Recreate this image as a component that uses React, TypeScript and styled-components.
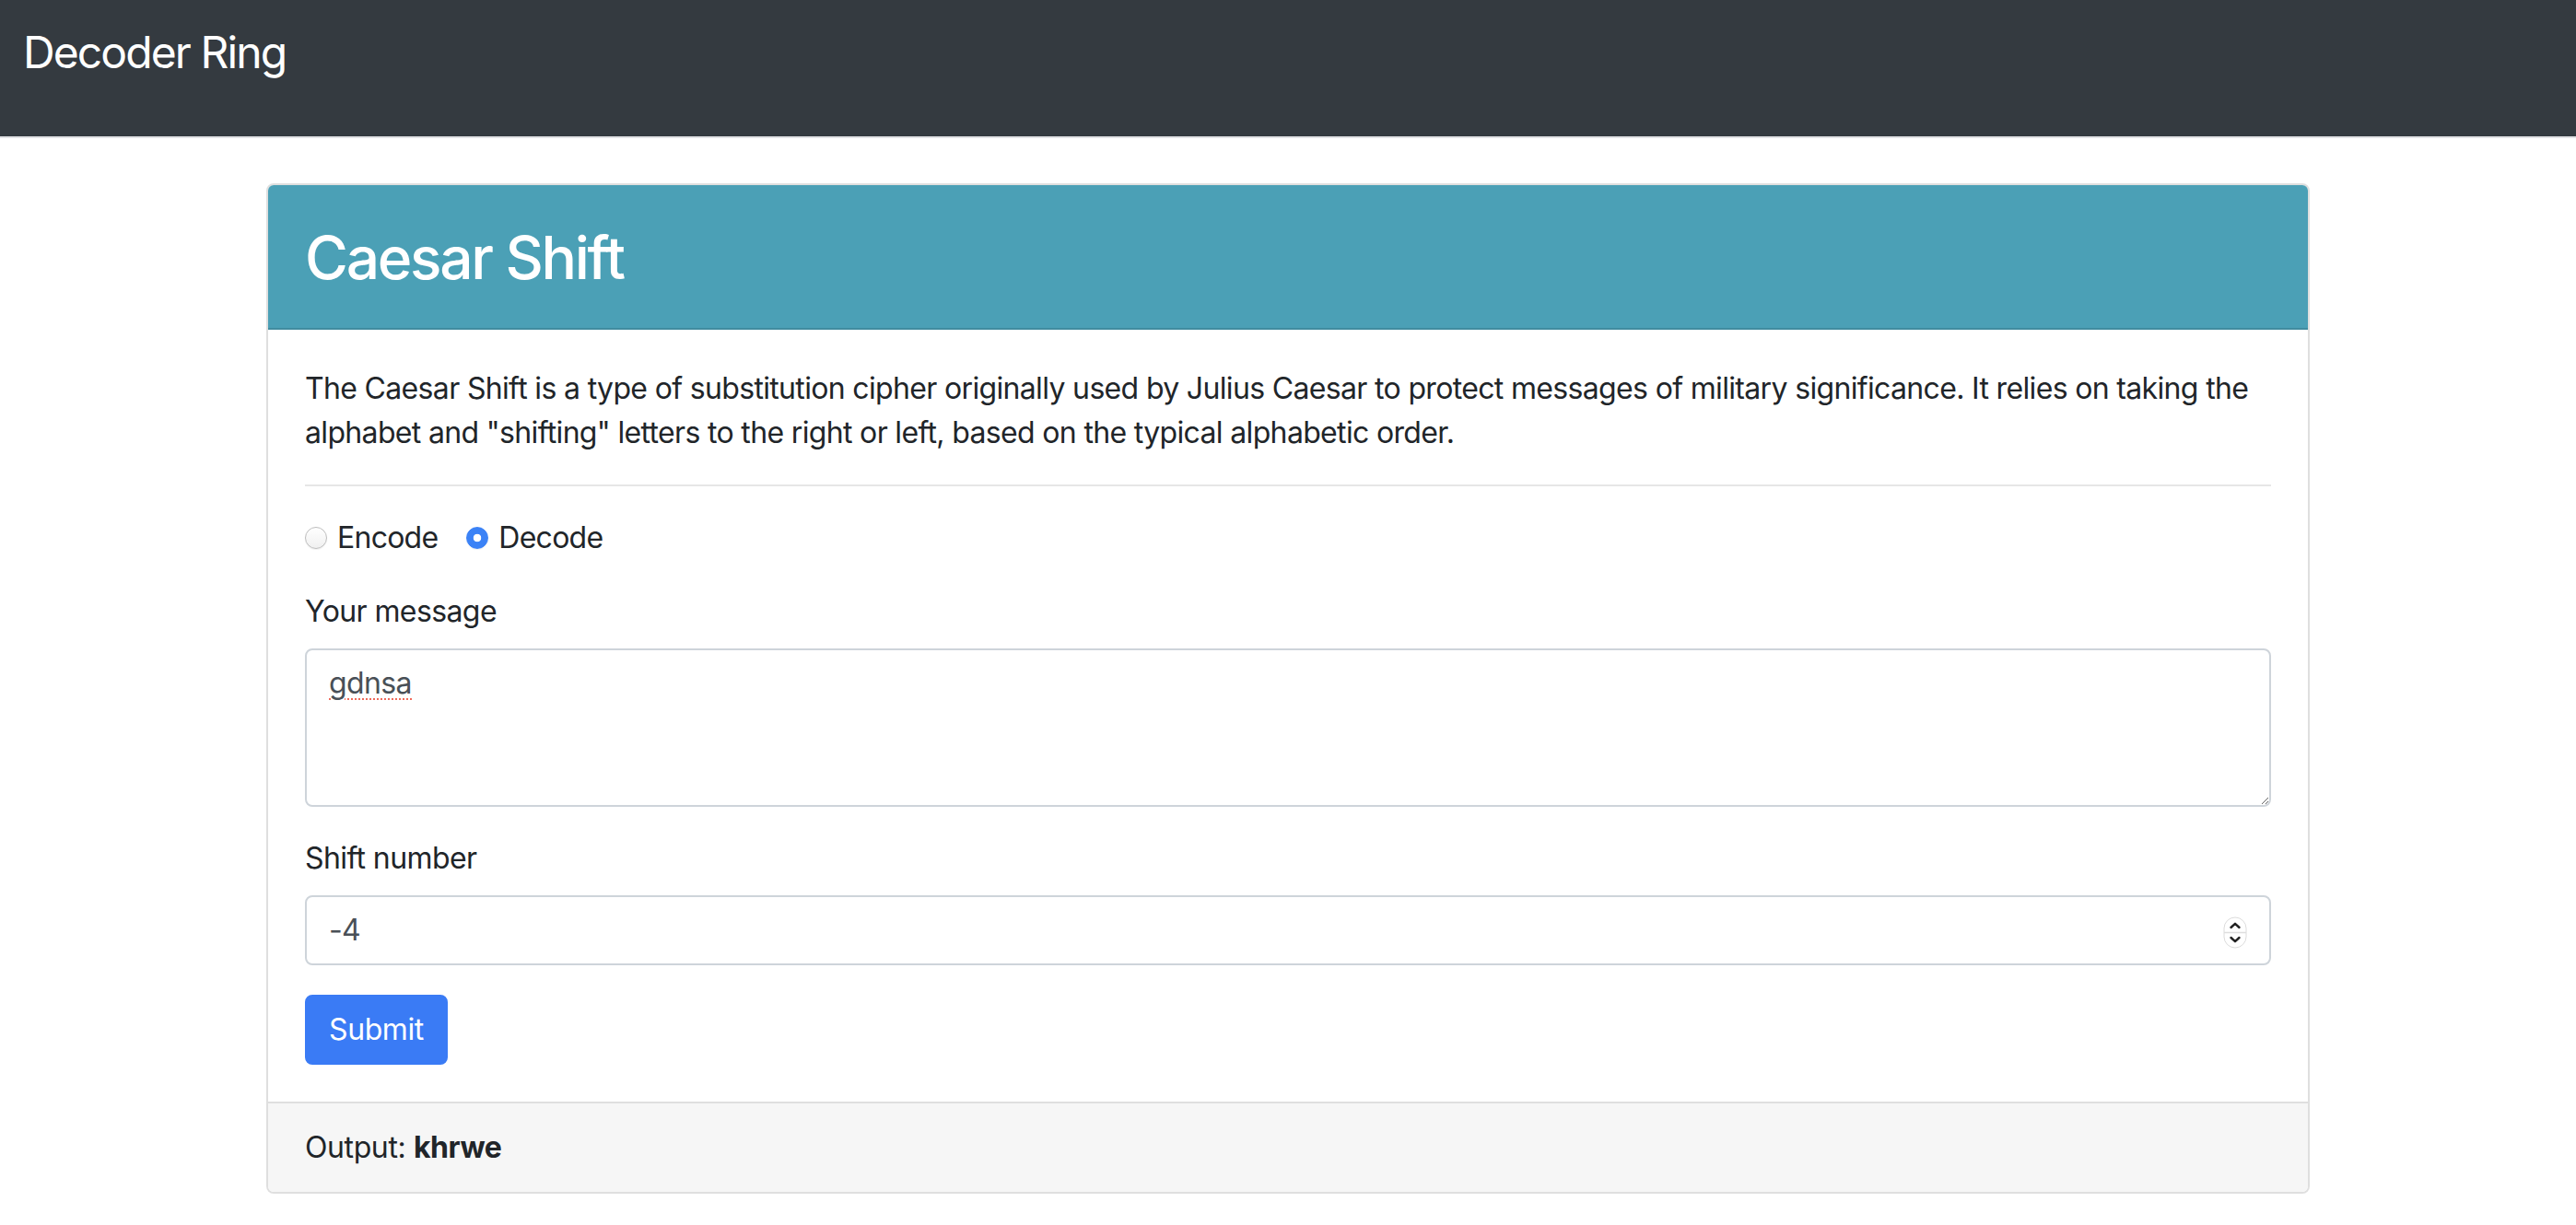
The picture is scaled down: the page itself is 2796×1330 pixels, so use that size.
import React from "react";
import styled, { createGlobalStyle } from "styled-components";

const GlobalStyle = createGlobalStyle`
  html, body {
    margin: 0;
    padding: 0;
    background: #ffffff;
  }
  body {
    font-family: "Inter", "Noto Sans", sans-serif;
    color: #212529;
    -webkit-font-smoothing: antialiased;
  }
  * { box-sizing: border-box; }
`;

const Navbar = styled.nav`
  height: 150px;
  background: #343a40;
  border-bottom: 2px solid #e1e2e5;
  padding: 21px 25px 0;
`;

const Brand = styled.a`
  display: inline-block;
  font-size: 48px;
  line-height: 72px;
  color: #ffffff;
  text-decoration: none;
  font-weight: 400;
  letter-spacing: -1.9px;
`;

const Container = styled.main`
  width: 2218px;
  margin: 49px auto 0;
`;

const Card = styled.section`
  border: 2px solid #dfdfdf;
  border-radius: 8px;
  overflow: hidden;
  background: #fff;
`;

const CardHeader = styled.header`
  background: #4ba0b6;
  padding: 41px 40px 37px;
  border-bottom: 2px solid rgba(0, 0, 0, 0.125);
`;

const Title = styled.h2`
  margin: 0;
  font-size: 64px;
  line-height: 1.2;
  font-weight: 500;
  color: #ffffff;
  letter-spacing: -2.3px;
`;

const CardBody = styled.div`
  padding: 40px;
`;

const Description = styled.p`
  margin: 0 0 32px;
  font-size: 32px;
  line-height: 48px;
  letter-spacing: -0.66px;
`;

const Divider = styled.hr`
  margin: 0 0 32px;
  border: 0;
  border-top: 2px solid #e6e6e6;
`;

const RadioGroup = styled.div`
  display: flex;
  gap: 31px;
  height: 48px;
  align-items: center;
  margin-bottom: 32px;
`;

const RadioLabel = styled.label`
  display: inline-flex;
  align-items: center;
  font-size: 32px;
  line-height: 48px;
  letter-spacing: -0.75px;
`;

const Radio = styled.input.attrs({ type: "radio" })`
  appearance: none;
  -webkit-appearance: none;
  width: 24px;
  height: 24px;
  margin: 0 11px 0 0;
  border-radius: 50%;
  border: 1.5px solid #bdbdbd;
  background: linear-gradient(#ffffff, #f0f0f0);
  box-shadow: 0 1px 1px rgba(0, 0, 0, 0.06);
  &:checked {
    border-color: #3b82f6;
    background: radial-gradient(circle, #ffffff 0 4px, #3b82f6 4.6px);
  }
`;

const FormGroup = styled.div`
  margin-bottom: 32px;
`;

const Label = styled.label`
  display: block;
  font-size: 32px;
  line-height: 48px;
  margin-bottom: 16px;
  letter-spacing: -0.6px;
`;

const fieldStyles = `
  display: block;
  width: 100%;
  font-family: "Inter", "Noto Sans", sans-serif;
  font-size: 32px;
  line-height: 48px;
  color: #495057;
  background: #fff;
  border: 2px solid #ced4da;
  border-radius: 8px;
  padding: 12px 24px;
  outline: none;
  letter-spacing: -0.6px;
`;

const TextArea = styled.textarea`
  ${fieldStyles}
  height: 172px;
  resize: vertical;
  text-decoration: underline dotted #ef6a5b;
  text-decoration-thickness: 2px;
  text-underline-offset: 6px;
`;

const NumberWrap = styled.div`
  position: relative;
`;

const NumberInput = styled.input`
  ${fieldStyles}
  height: 76px;
  -moz-appearance: textfield;
  &::-webkit-inner-spin-button,
  &::-webkit-outer-spin-button {
    -webkit-appearance: none;
    margin: 0;
  }
`;

const Spinner = styled.svg`
  position: absolute;
  right: 26px;
  top: 23px;
  width: 26px;
  height: 35px;
  pointer-events: none;
`;

const SubmitButton = styled.button`
  font-family: "Inter", "Noto Sans", sans-serif;
  font-size: 32px;
  line-height: 48px;
  color: #ffffff;
  background: #3a7bf5;
  border: 2px solid #3a7bf5;
  border-radius: 8px;
  padding: 12px 24px;
  cursor: pointer;
  letter-spacing: -0.4px;
`;

const CardFooter = styled.footer`
  background: #f6f6f6;
  border-top: 2px solid #dfdfdf;
  padding: 24px 40px;
  font-size: 32px;
  line-height: 48px;
  letter-spacing: -0.4px;
`;

const Strong = styled.strong`
  font-weight: 700;
`;

export default function App() {
  return (
    <>
      <GlobalStyle />
      <Navbar>
        <Brand href="#">Decoder Ring</Brand>
      </Navbar>
      <Container>
        <Card>
          <CardHeader>
            <Title>Caesar Shift</Title>
          </CardHeader>
          <CardBody>
            <Description>
              The Caesar Shift is a type of substitution cipher originally used by Julius Caesar to
              protect messages of military significance. It relies on taking the alphabet and
              "shifting" letters to the right or left, based on the typical alphabetic order.
            </Description>
            <Divider />
            <form onSubmit={(e) => e.preventDefault()}>
              <RadioGroup>
                <RadioLabel>
                  <Radio name="mode" value="encode" />
                  Encode
                </RadioLabel>
                <RadioLabel>
                  <Radio name="mode" value="decode" defaultChecked />
                  Decode
                </RadioLabel>
              </RadioGroup>
              <FormGroup>
                <Label htmlFor="message">Your message</Label>
                <TextArea id="message" rows={3} defaultValue="gdnsa" spellCheck={false} />
              </FormGroup>
              <FormGroup>
                <Label htmlFor="shift">Shift number</Label>
                <NumberWrap>
                  <NumberInput id="shift" type="number" defaultValue={-4} />
                  <Spinner viewBox="0 0 26 35" aria-hidden="true">
                    <rect x="1" y="1" width="24" height="33" rx="12" fill="#ffffff" stroke="#dcdcdc" strokeWidth="1" />
                    <line x1="1" y1="17.5" x2="25" y2="17.5" stroke="#dedede" strokeWidth="1.5" />
                    <path d="M8.5 12 L13 7.8 L17.5 12" fill="none" stroke="#222" strokeWidth="2.4" strokeLinecap="round" strokeLinejoin="round" />
                    <path d="M8.5 23 L13 27.2 L17.5 23" fill="none" stroke="#222" strokeWidth="2.4" strokeLinecap="round" strokeLinejoin="round" />
                  </Spinner>
                </NumberWrap>
              </FormGroup>
              <SubmitButton type="submit">Submit</SubmitButton>
            </form>
          </CardBody>
          <CardFooter>
            Output: <Strong>khrwe</Strong>
          </CardFooter>
        </Card>
      </Container>
    </>
  );
}
